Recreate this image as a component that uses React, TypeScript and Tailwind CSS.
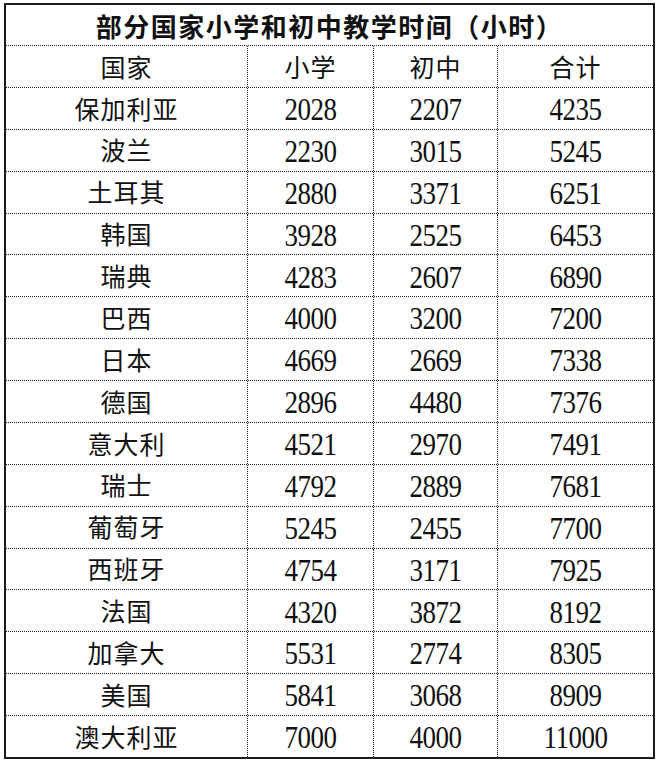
import React from "react";

const rows: [string, number, number, number][] = [
  ["保加利亚", 2028, 2207, 4235],
  ["波兰", 2230, 3015, 5245],
  ["土耳其", 2880, 3371, 6251],
  ["韩国", 3928, 2525, 6453],
  ["瑞典", 4283, 2607, 6890],
  ["巴西", 4000, 3200, 7200],
  ["日本", 4669, 2669, 7338],
  ["德国", 2896, 4480, 7376],
  ["意大利", 4521, 2970, 7491],
  ["瑞士", 4792, 2889, 7681],
  ["葡萄牙", 5245, 2455, 7700],
  ["西班牙", 4754, 3171, 7925],
  ["法国", 4320, 3872, 8192],
  ["加拿大", 5531, 2774, 8305],
  ["美国", 5841, 3068, 8909],
  ["澳大利亚", 7000, 4000, 11000],
];

const cjk = "font-['Noto_Sans_CJK_SC',sans-serif]";
const num = "font-['Liberation_Serif','Noto_Sans_CJK_SC',serif]";

const App: React.FC = () => {
  const cell = "flex items-center justify-center border-l border-dotted border-[#222]";
  const Num = ({ v }: { v: number }) => (
    <div className={`${cell} text-[27px] tracking-[-0.5px] ${num}`}>
      <span className="inline-block scale-y-[1.2] translate-y-[1px]">{v}</span>
    </div>
  );

  return (
    <div className="w-[660px] h-[764px] bg-white pt-[3px] pl-[4px]">
      <div className="w-[651px] border-2 border-[#1a1a1a] text-[#111]">
        {/* TITLE */}
        <div
          className={`h-[40px] flex items-center justify-center text-[26px] font-bold tracking-[1.5px] ${cjk}`}
        >
          部分国家小学和初中教学时间（小时）
        </div>

        {/* HEADER */}
        <div className="grid grid-cols-[241px_126px_124px_156px] h-[41.875px] border-t border-dotted border-[#222]">
          <div className={`flex items-center justify-center text-[25px] tracking-[1px] ${cjk}`}>国家</div>
          <div className={`${cell} text-[25px] tracking-[1px] ${cjk}`}>小学</div>
          <div className={`${cell} text-[25px] tracking-[1px] ${cjk}`}>初中</div>
          <div className={`${cell} text-[25px] tracking-[1px] ${cjk}`}>合计</div>
        </div>

        {/* DATA */}
        {rows.map(([name, a, b, c]) => (
          <div
            key={name}
            className="grid grid-cols-[241px_126px_124px_156px] h-[41.875px] border-t border-dotted border-[#222]"
          >
            <div className={`flex items-center justify-center text-[25px] tracking-[1px] ${cjk}`}>{name}</div>
            <Num v={a} />
            <Num v={b} />
            <Num v={c} />
          </div>
        ))}
      </div>
    </div>
  );
};

export default App;
